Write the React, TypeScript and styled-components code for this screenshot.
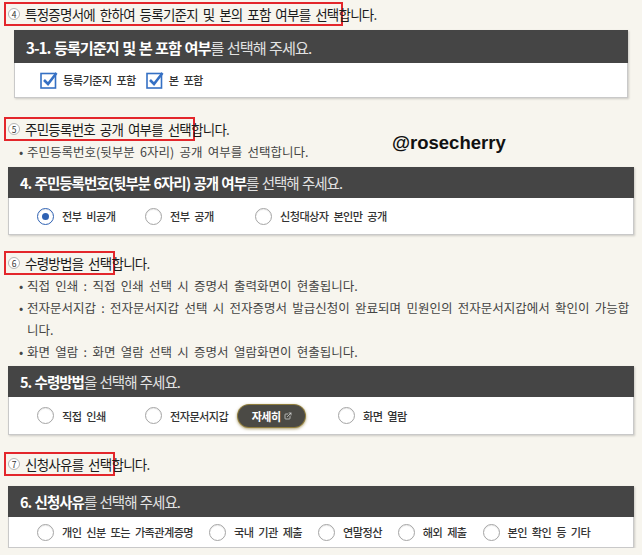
import React from "react";
import styled, { createGlobalStyle } from "styled-components";
import { ExternalLink } from "lucide-react";

const GlobalStyle = createGlobalStyle`
  body {
    margin: 0;
    background: #f7f5ee;
    font-family: "Noto Sans CJK KR", "Noto Sans", sans-serif;
  }
`;

const Page = styled.div`
  width: 642px;
  padding-top: 2px;
`;

const Section = styled.div`
  position: relative;
`;

const Step = styled.div<{ $mt: number }>`
  display: flex;
  align-items: center;
  height: 24px;
  margin: ${(p) => p.$mt}px 0 0 8px;
  font-size: 13.5px;
  letter-spacing: -0.75px;
  word-spacing: 2.5px;
  color: #1b1b1b;
  white-space: nowrap;
`;

const Mark = styled.span`
  display: inline-flex;
  align-items: center;
  gap: 5px;
  line-height: 16px;
  outline: 2px solid #e3262b;
  outline-offset: 2px;
`;

const Num = styled.span`
  width: 12px;
  height: 12px;
  box-sizing: border-box;
  border-radius: 50%;
  border: 1px solid #b5b5b5;
  background: #fff;
  color: #333;
  font-size: 8.5px;
  letter-spacing: 0;
  display: inline-flex;
  align-items: center;
  justify-content: center;
`;

const Bullets = styled.ul`
  list-style: none;
  margin: 0 0 0 19px;
  padding: 0;
  font-size: 12.5px;
  letter-spacing: 0;
  word-spacing: 2.5px;
  color: #444;
`;

const Bullet = styled.li<{ $lh: number }>`
  display: flex;
  line-height: ${(p) => p.$lh}px;
  white-space: nowrap;

  &::before {
    content: "•";
    width: 8px;
    flex: none;
  }
`;

const Watermark = styled.div`
  position: absolute;
  left: 392px;
  top: 15px;
  font-family: "Liberation Sans", Arial, sans-serif;
  font-weight: bold;
  font-size: 18.5px;
  color: #111;
`;

const Panel = styled.section<{ $mt: number; $ml: number; $w: number }>`
  margin: ${(p) => p.$mt}px 0 0 ${(p) => p.$ml}px;
  width: ${(p) => p.$w}px;
  box-shadow: 1px 1px 2px rgba(0, 0, 0, 0.18);
`;

const PanelHead = styled.div<{ $h: number; $fs?: number }>`
  height: ${(p) => p.$h}px;
  background: #454545;
  display: flex;
  align-items: center;
  padding-left: 12px;
  font-size: ${(p) => p.$fs ?? 14.5}px;
  letter-spacing: -1px;
  word-spacing: 1px;
  color: #e2e2e2;
  white-space: nowrap;

  b {
    color: #fff;
    font-weight: bold;
  }
`;

const PanelBody = styled.div<{ $h: number; $pl: number; $gap?: number }>`
  height: ${(p) => p.$h}px;
  box-sizing: border-box;
  background: #fff;
  border: 1px solid #c9c9c9;
  border-top: 0;
  display: flex;
  align-items: center;
  gap: ${(p) => p.$gap ?? 0}px;
  padding-left: ${(p) => p.$pl}px;
`;

const Option = styled.label<{ $minw?: number; $gap?: number }>`
  display: flex;
  align-items: center;
  gap: ${(p) => p.$gap ?? 8}px;
  min-width: ${(p) => p.$minw ?? 0}px;
  font-size: 11.2px;
  letter-spacing: -0.6px;
  word-spacing: 3px;
  color: #333;
  font-weight: 500;
  white-space: nowrap;
`;

const Radio = styled.span<{ $on?: boolean }>`
  width: 17px;
  height: 17px;
  box-sizing: border-box;
  border-radius: 50%;
  border: ${(p) => (p.$on ? "1.5px solid #2f62b3" : "1px solid #a5a5a5")};
  background: #fff;
  box-shadow: inset 0 1px 1px rgba(0, 0, 0, 0.08);
  display: flex;
  align-items: center;
  justify-content: center;
  flex: none;

  &::after {
    content: "";
    display: ${(p) => (p.$on ? "block" : "none")};
    width: 7px;
    height: 7px;
    border-radius: 50%;
    background: #2f62b3;
  }
`;

const MoreBtn = styled.button`
  margin-left: 2px;
  width: 67px;
  height: 22px;
  border: 0;
  border-radius: 11px;
  background: #4b4a45;
  color: #fff;
  font-family: inherit;
  font-size: 11px;
  font-weight: bold;
  letter-spacing: -0.5px;
  display: inline-flex;
  align-items: center;
  justify-content: center;
  gap: 3px;
  box-shadow: 0 0 0 1px #8f7d3e, 0 1px 3px 1px rgba(140, 120, 50, 0.7);
`;

function Check() {
  return (
    <svg width="18" height="18" viewBox="0 0 18 18" style={{ flex: "none" }}>
      <rect x="1" y="2.5" width="14.5" height="14.5" fill="#fff" stroke="#3570c4" strokeWidth="1.6" />
      <path d="M4 9 L8 13 L16.5 2" fill="none" stroke="#3570c4" strokeWidth="2.6" strokeLinejoin="miter" />
    </svg>
  );
}

export default function App() {
  return (
    <>
      <GlobalStyle />
      <Page>
        <Section>
          <Step $mt={0}>
            <Mark>
              <Num>4</Num>
              특정증명서에 한하여 등록기준지 및 본의 포함 여부를 선택
            </Mark>
            합니다.
          </Step>
          <Panel $mt={4} $ml={14} $w={614}>
            <PanelHead $h={33} $fs={15.2}>
              <b>3-1. 등록기준지 및 본 포함 여부</b>를 선택해 주세요.
            </PanelHead>
            <PanelBody $h={35} $pl={25} $gap={10}>
              <Option $gap={5}>
                <Check />
                등록기준지 포함
              </Option>
              <Option $gap={5}>
                <Check />본 포함
              </Option>
            </PanelBody>
          </Panel>
        </Section>

        <Section>
          <Step $mt={19}>
            <Mark>
              <Num>5</Num>
              주민등록번호 공개 여부를 선택
            </Mark>
            합니다.
          </Step>
          <Bullets>
            <Bullet $lh={21}>주민등록번호(뒷부분 6자리) 공개 여부를 선택합니다.</Bullet>
          </Bullets>
          <Watermark>@rosecherry</Watermark>
          <Panel $mt={5} $ml={8} $w={626}>
            <PanelHead $h={31}>
              <b>4. 주민등록번호(뒷부분 6자리) 공개 여부</b>를 선택해 주세요.
            </PanelHead>
            <PanelBody $h={37} $pl={28}>
              <Option $minw={108}>
                <Radio $on />
                전부 비공개
              </Option>
              <Option $minw={110}>
                <Radio />
                전부 공개
              </Option>
              <Option>
                <Radio />
                신청대상자 본인만 공개
              </Option>
            </PanelBody>
          </Panel>
        </Section>

        <Section>
          <Step $mt={16}>
            <Mark>
              <Num>6</Num>
              수령방법을 선택
            </Mark>
            합니다.
          </Step>
          <Bullets>
            <Bullet $lh={22}>직접 인쇄 : 직접 인쇄 선택 시 증명서 출력화면이 현출됩니다.</Bullet>
            <Bullet $lh={22}>
              <span>
                전자문서지갑 : 전자문서지갑 선택 시 전자증명서 발급신청이 완료되며 민원인의 전자문서지갑에서 확인이 가능합
                <br />
                니다.
              </span>
            </Bullet>
            <Bullet $lh={22}>화면 열람 : 화면 열람 선택 시 증명서 열람화면이 현출됩니다.</Bullet>
          </Bullets>
          <Panel $mt={3} $ml={8} $w={626}>
            <PanelHead $h={31}>
              <b>5. 수령방법</b>을 선택해 주세요.
            </PanelHead>
            <PanelBody $h={38} $pl={28}>
              <Option $minw={108}>
                <Radio />
                직접 인쇄
              </Option>
              <Option $minw={193}>
                <Radio />
                전자문서지갑
                <MoreBtn type="button">
                  자세히
                  <ExternalLink size={8} strokeWidth={2.2} color="#ddd" />
                </MoreBtn>
              </Option>
              <Option>
                <Radio />
                화면 열람
              </Option>
            </PanelBody>
          </Panel>
        </Section>

        <Section>
          <Step $mt={17}>
            <Mark>
              <Num>7</Num>
              신청사유를 선택
            </Mark>
            합니다.
          </Step>
          <Panel $mt={10} $ml={8} $w={626}>
            <PanelHead $h={31}>
              <b>6. 신청사유</b>를 선택해 주세요.
            </PanelHead>
            <PanelBody $h={31} $pl={28} $gap={16}>
              <Option>
                <Radio />
                개인 신분 또는 가족관계증명
              </Option>
              <Option>
                <Radio />
                국내 기관 제출
              </Option>
              <Option>
                <Radio />
                연말정산
              </Option>
              <Option>
                <Radio />
                해외 제출
              </Option>
              <Option>
                <Radio />
                본인 확인 등 기타
              </Option>
            </PanelBody>
          </Panel>
        </Section>
      </Page>
    </>
  );
}
